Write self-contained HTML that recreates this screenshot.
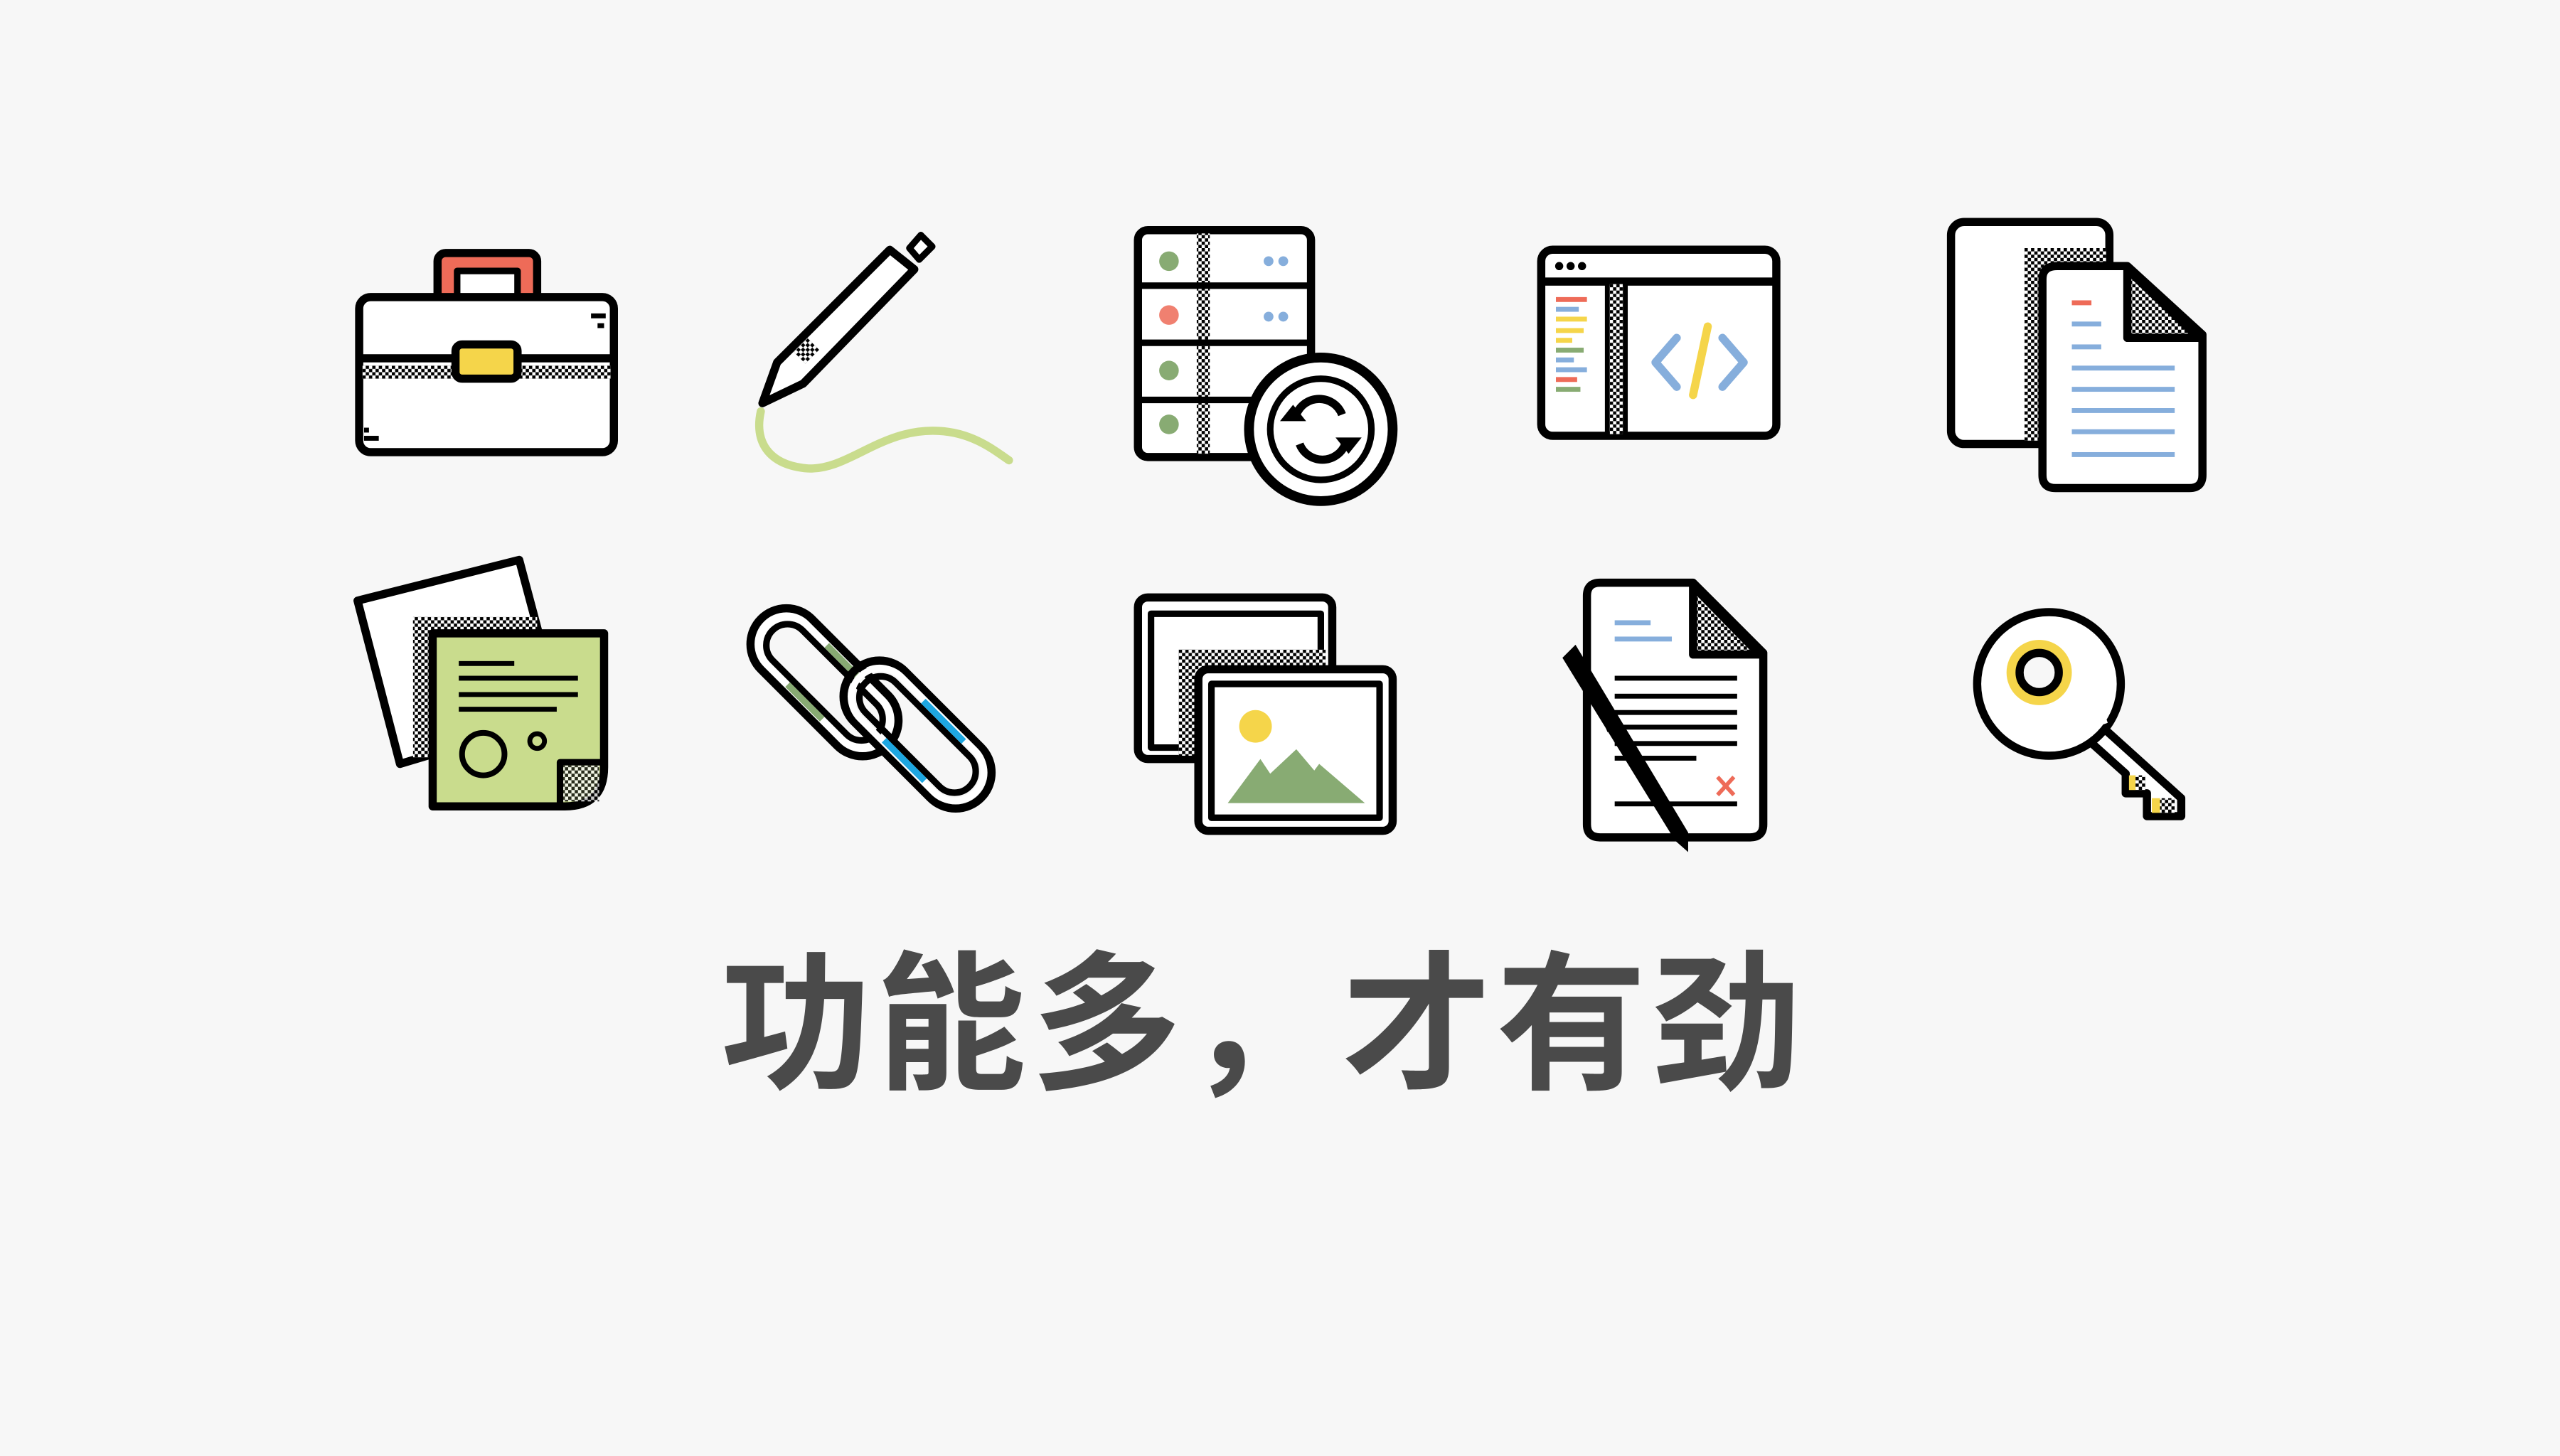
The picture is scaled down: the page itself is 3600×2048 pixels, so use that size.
<!DOCTYPE html>
<html><head><meta charset="utf-8"><style>
html,body{margin:0;padding:0;background:#f7f7f7;}
svg{display:block;}
</style></head><body>
<svg width="3600" height="2048" viewBox="0 0 1568 892" xmlns="http://www.w3.org/2000/svg">
<defs>
<pattern id="ck" width="4" height="4" patternUnits="userSpaceOnUse">
<rect width="4" height="4" fill="#fff"/><rect width="2" height="2" fill="#000"/><rect x="2" y="2" width="2" height="2" fill="#000"/>
</pattern>
</defs>
<rect width="1568" height="892" fill="#f7f7f7"/>
<g stroke-linejoin="round">
<!-- 1 briefcase -->
<rect x="268" y="155" width="61" height="32" rx="5" fill="#ee6b58" stroke="#000" stroke-width="5"/>
<rect x="280" y="166" width="37" height="20" fill="#fff" stroke="#000" stroke-width="4"/>
<rect x="220" y="182" width="156" height="95" rx="7" fill="#fff" stroke="#000" stroke-width="5"/>
<rect x="222" y="217" width="152" height="5" fill="#000"/>
<rect x="222" y="224" width="152" height="8" fill="url(#ck)"/>
<rect x="279" y="211" width="38" height="21" rx="4" fill="#f5d54a" stroke="#000" stroke-width="5"/>
<rect x="362" y="192" width="9" height="3" fill="#000"/><rect x="366" y="198" width="4" height="3" fill="#000"/>
<rect x="223" y="262" width="3" height="3" fill="#000"/><rect x="223" y="267" width="9" height="3" fill="#000"/>
<!-- 2 pen -->
<path d="M466 252 C462 270 470 285 495 287 C520 288 540 262 575 264 C595 265 608 275 618 282" fill="none" stroke="#c9dc8d" stroke-width="5" stroke-linecap="round"/>
<path d="M467 247 L476 222 L545 153 L560 165 L492 235 Z" fill="#fff" stroke="#000" stroke-width="5"/>
<path d="M557 152 L564 144 L571 151 L563 159 Z" fill="#fff" stroke="#000" stroke-width="4"/>
<rect x="488" y="210" width="12" height="10" fill="url(#ck)" transform="rotate(-45 494 215)"/>
<!-- 3 server -->
<rect x="697" y="141" width="106" height="139" rx="6" fill="#fff" stroke="#000" stroke-width="5"/>
<rect x="733" y="143" width="8" height="135" fill="url(#ck)"/>
<rect x="699" y="173" width="102" height="4" fill="#000"/><rect x="699" y="208" width="102" height="4" fill="#000"/><rect x="699" y="243" width="102" height="4" fill="#000"/>
<circle cx="716" cy="160" r="6" fill="#88ab73"/><circle cx="716" cy="193" r="6" fill="#f08070"/><circle cx="716" cy="227" r="6" fill="#88ab73"/><circle cx="716" cy="260" r="6" fill="#88ab73"/>
<circle cx="777" cy="160" r="3" fill="#86aedc"/><circle cx="786" cy="160" r="3" fill="#86aedc"/><circle cx="777" cy="194" r="3" fill="#86aedc"/><circle cx="786" cy="194" r="3" fill="#86aedc"/>
<circle cx="809" cy="263" r="44" fill="#fff" stroke="#000" stroke-width="6"/>
<circle cx="809" cy="263" r="31" fill="#fff" stroke="#000" stroke-width="4"/>
<path d="M796 272 A15 15 0 0 0 824 272" fill="none" stroke="#000" stroke-width="5"/>
<path d="M822 254 A15 15 0 0 0 794 254" fill="none" stroke="#000" stroke-width="5"/>
<path d="M784 258 L792 248 L800 258 Z" fill="#000"/><path d="M818 268 L826 278 L834 268 Z" fill="#000"/>
<!-- 4 browser -->
<rect x="944" y="153" width="144" height="114" rx="7" fill="#fff" stroke="#000" stroke-width="5"/>
<rect x="946" y="170" width="140" height="5" fill="#000"/>
<circle cx="955" cy="163" r="2.5"/><circle cx="962" cy="163" r="2.5"/><circle cx="969" cy="163" r="2.5"/>
<rect x="983" y="174" width="3" height="92" fill="#000"/><rect x="986" y="174" width="8" height="92" fill="url(#ck)"/><rect x="994" y="174" width="3" height="92" fill="#000"/>
<rect x="953" y="182" width="19" height="3" fill="#ee6b58"/><rect x="953" y="188" width="14" height="3" fill="#86aedc"/><rect x="953" y="194" width="19" height="3" fill="#f5d54a"/><rect x="953" y="201" width="17" height="3" fill="#f5d54a"/><rect x="953" y="207" width="10" height="3" fill="#f5d54a"/><rect x="953" y="213" width="17" height="3" fill="#88ab73"/><rect x="953" y="219" width="11" height="3" fill="#86aedc"/><rect x="953" y="225" width="19" height="3" fill="#86aedc"/><rect x="953" y="231" width="13" height="3" fill="#ee6b58"/><rect x="953" y="237" width="15" height="3" fill="#88ab73"/>
<path d="M1027 207 L1014 222 L1027 237 M1055 207 L1068 222 L1055 237" fill="none" stroke="#86aedc" stroke-width="5" stroke-linecap="round"/>
<path d="M1046 200 L1037 242" stroke="#f5d54a" stroke-width="5" stroke-linecap="round"/>
<!-- 5 documents -->
<rect x="1195" y="136" width="97" height="136" rx="8" fill="#fff" stroke="#000" stroke-width="5"/>
<rect x="1240" y="152" width="50" height="16" fill="url(#ck)"/><rect x="1240" y="152" width="12" height="118" fill="url(#ck)"/>
<path d="M1260 163 L1303 163 L1349 205 L1349 291 Q1349 299 1341 299 L1259 299 Q1251 299 1251 291 L1251 171 Q1251 163 1260 163 Z" fill="#fff" stroke="#000" stroke-width="5"/>
<path d="M1303 165 L1303 207 L1347 207 Z" fill="url(#ck)" stroke="#000" stroke-width="5"/>
<rect x="1269" y="184" width="12" height="3" fill="#ee6b58"/><rect x="1269" y="197" width="18" height="3" fill="#86aedc"/><rect x="1269" y="211" width="18" height="3" fill="#86aedc"/>
<g fill="#86aedc"><rect x="1269" y="224" width="63" height="3"/><rect x="1269" y="237" width="63" height="3"/><rect x="1269" y="250" width="63" height="3"/><rect x="1269" y="263" width="63" height="3"/><rect x="1269" y="277" width="63" height="3"/></g>
<!-- 6 papers -->
<path d="M219 368 L318 343 L330 388 L265 400 L265 462 L245 468 Z" fill="#fff" stroke="#000" stroke-width="5"/>
<rect x="253" y="378" width="76" height="10" fill="url(#ck)"/><rect x="253" y="378" width="11" height="86" fill="url(#ck)"/>
<path d="M265 388 L370 388 L370 470 Q370 494 346 494 L265 494 Z" fill="#c9dc8d" stroke="#000" stroke-width="5"/>
<path d="M343 494 L343 467 L370 467" fill="none" stroke="#000" stroke-width="4"/>
<rect x="345" y="469" width="22" height="22" fill="url(#ck)" opacity=".8"/>
<rect x="281" y="405" width="34" height="3"/><rect x="281" y="414" width="73" height="3"/><rect x="281" y="424" width="73" height="3"/><rect x="281" y="433" width="60" height="3"/>
<circle cx="296" cy="462" r="13" fill="none" stroke="#000" stroke-width="3.5"/><circle cx="329" cy="454" r="4.5" fill="none" stroke="#000" stroke-width="3"/>
<!-- 7 chain -->
<g transform="rotate(45 505 418)"><rect x="450" y="396" width="110" height="44" rx="22" fill="#fff" stroke="#000" stroke-width="5"/><rect x="460" y="405" width="90" height="26" rx="13" fill="#f7f7f7" stroke="#000" stroke-width="4"/><rect x="490" y="399" width="30" height="4" fill="#88ab73"/><rect x="490" y="433" width="30" height="4" fill="#88ab73"/></g>
<g transform="rotate(45 562 450)"><rect x="507" y="428" width="110" height="44" rx="22" fill="none" stroke="#000" stroke-width="5"/><rect x="512" y="432" width="100" height="36" rx="18" fill="none" stroke="#fff" stroke-width="4"/><rect x="517" y="437" width="90" height="26" rx="13" fill="none" stroke="#000" stroke-width="4"/><rect x="550" y="431" width="35" height="4" fill="#1ea7e1"/><rect x="550" y="465" width="35" height="4" fill="#1ea7e1"/></g>
<!-- 8 images -->
<rect x="697" y="366" width="119" height="99" rx="6" fill="#fff" stroke="#000" stroke-width="5"/>
<rect x="705" y="376" width="104" height="82" fill="#fff" stroke="#000" stroke-width="4"/>
<rect x="722" y="398" width="90" height="12" fill="url(#ck)"/><rect x="722" y="398" width="10" height="65" fill="url(#ck)"/>
<rect x="734" y="410" width="119" height="99" rx="6" fill="#fff" stroke="#000" stroke-width="5"/>
<rect x="742" y="419" width="103" height="82" fill="#fff" stroke="#000" stroke-width="4"/>
<circle cx="769" cy="445" r="10" fill="#f5d54a"/>
<path d="M752 492 L772 465 L778 474 L794 459 L805 472 L808 468 L836 492 Z" fill="#88ab73"/>
<!-- 9 doc with pen -->
<path d="M980 357 L1037 357 L1080 400 L1080 505 Q1080 513 1072 513 L980 513 Q972 513 972 505 L972 365 Q972 357 980 357 Z" fill="#fff" stroke="#000" stroke-width="5"/>
<path d="M1037 359 L1037 401 L1078 401 Z" fill="url(#ck)" stroke="#000" stroke-width="5"/>
<rect x="989" y="380" width="22" height="3" fill="#86aedc"/><rect x="989" y="390" width="35" height="3" fill="#86aedc"/>
<rect x="989" y="414" width="75" height="3"/><rect x="989" y="425" width="75" height="3"/><rect x="989" y="435" width="75" height="3"/><rect x="989" y="444" width="75" height="3"/><rect x="989" y="454" width="75" height="3"/><rect x="989" y="463" width="50" height="3"/><rect x="989" y="491" width="75" height="3"/>
<path d="M1052 476 L1062 487 M1062 476 L1052 487" stroke="#ee6b58" stroke-width="2.5"/>
<path d="M957 403 L965 395 L1034 510 L1034 522 L1026 515 Z" fill="#000"/>
<path d="M968 405 L986 448" stroke="#000" stroke-width="3"/>
<!-- 10 key -->
<path d="M1285 443 L1336 489 L1336 500 L1315 500 L1315 486 L1302 486 L1302 474 L1273 448 Z" fill="#fff" stroke="#000" stroke-width="5"/>
<circle cx="1255" cy="419" r="44" fill="#fff" stroke="#000" stroke-width="5"/>
<path d="M1270 447 L1290 440" stroke="#fff" stroke-width="6"/>
<rect x="1304" y="475" width="4" height="9" fill="#f5d54a"/><rect x="1308" y="475" width="6" height="9" fill="url(#ck)"/>
<rect x="1318" y="489" width="5" height="9" fill="#f5d54a"/><rect x="1323" y="489" width="9" height="9" fill="url(#ck)"/>
<circle cx="1249" cy="412" r="20" fill="#f5d54a"/>
<circle cx="1249" cy="412" r="12" fill="#f7f7f7" stroke="#000" stroke-width="5"/>
</g>
<text x="774" y="660" text-anchor="middle" font-family="'Liberation Sans','Noto Sans CJK SC',sans-serif" font-weight="bold" font-size="92" letter-spacing="3" fill="#4a4a4a">功能多，才有劲</text>
</svg>
</body></html>
